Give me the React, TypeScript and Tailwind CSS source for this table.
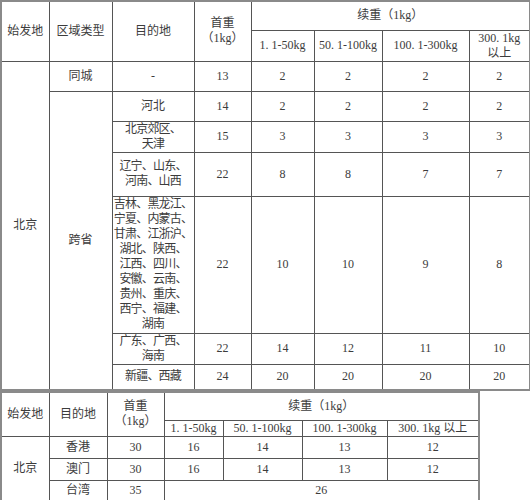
import React from "react";

const td = "border border-[#555] text-center align-middle p-0 leading-[15px] whitespace-nowrap";
const tdt = "border border-[#555] text-center align-middle p-0 leading-[15px] whitespace-nowrap tracking-[-0.8px]";

export default function App() {
  return (
    <div
      className="w-[530px] h-[500px] bg-white text-[#3c3c3c] text-[12px] overflow-hidden"
      style={{ fontFamily: '"Liberation Serif","Noto Sans CJK SC",serif' }}
    >
      <table className="table-fixed border-collapse w-[529px] border-2 border-[#8a8a8a]">
        <colgroup>
          <col className="w-[48px]" />
          <col className="w-[63px]" />
          <col className="w-[82px]" />
          <col className="w-[57px]" />
          <col className="w-[63px]" />
          <col className="w-[68px]" />
          <col className="w-[87px]" />
          <col className="w-[61px]" />
        </colgroup>
        <tbody>
          <tr className="h-[29px]">
            <td rowSpan={2} className={td}>始发地</td>
            <td rowSpan={2} className={td}>区域类型</td>
            <td rowSpan={2} className={td}>目的地</td>
            <td rowSpan={2} className={td}>首重<br />（1kg）</td>
            <td colSpan={4} className={td}>续重（1kg）</td>
          </tr>
          <tr className="h-[30px]">
            <td className={td}>1. 1-50kg</td>
            <td className={td}>50. 1-100kg</td>
            <td className={td}>100. 1-300kg</td>
            <td className={td}>300. 1kg<br />以上</td>
          </tr>
          <tr className="h-[30px]">
            <td rowSpan={7} className={td}>北京</td>
            <td className={td}>同城</td>
            <td className={td}>-</td>
            <td className={td}>13</td>
            <td className={td}>2</td>
            <td className={td}>2</td>
            <td className={td}>2</td>
            <td className={td}>2</td>
          </tr>
          <tr className="h-[30px]">
            <td rowSpan={6} className={td}>跨省</td>
            <td className={td}>河北</td>
            <td className={td}>14</td>
            <td className={td}>2</td>
            <td className={td}>2</td>
            <td className={td}>2</td>
            <td className={td}>2</td>
          </tr>
          <tr className="h-[31px]">
            <td className={tdt}>北京郊区、<br />天津</td>
            <td className={td}>15</td>
            <td className={td}>3</td>
            <td className={td}>3</td>
            <td className={td}>3</td>
            <td className={td}>3</td>
          </tr>
          <tr className="h-[44px]">
            <td className={tdt}>辽宁、山东、<br />河南、山西</td>
            <td className={td}>22</td>
            <td className={td}>8</td>
            <td className={td}>8</td>
            <td className={td}>7</td>
            <td className={td}>7</td>
          </tr>
          <tr className="h-[137px]">
            <td className={tdt}>
              吉林、黑龙江、<br />宁夏、内蒙古、<br />甘肃、江浙沪、<br />湖北、陕西、<br />江西、四川、<br />安徽、云南、<br />贵州、重庆、<br />西宁、福建、<br />湖南
            </td>
            <td className={td}>22</td>
            <td className={td}>10</td>
            <td className={td}>10</td>
            <td className={td}>9</td>
            <td className={td}>8</td>
          </tr>
          <tr className="h-[31px]">
            <td className={tdt}>广东、广西、<br />海南</td>
            <td className={td}>22</td>
            <td className={td}>14</td>
            <td className={td}>12</td>
            <td className={td}>11</td>
            <td className={td}>10</td>
          </tr>
          <tr className="h-[26px]">
            <td className={tdt}>新疆、西藏</td>
            <td className={td}>24</td>
            <td className={td}>20</td>
            <td className={td}>20</td>
            <td className={td}>20</td>
            <td className={td}>20</td>
          </tr>
        </tbody>
      </table>

      <table className="table-fixed border-collapse w-[478px] border-2 border-[#8a8a8a]">
        <colgroup>
          <col className="w-[48px]" />
          <col className="w-[58px]" />
          <col className="w-[57px]" />
          <col className="w-[59px]" />
          <col className="w-[79px]" />
          <col className="w-[85px]" />
          <col className="w-[92px]" />
        </colgroup>
        <tbody>
          <tr className="h-[28px]">
            <td rowSpan={2} className={td}>始发地</td>
            <td rowSpan={2} className={td}>目的地</td>
            <td rowSpan={2} className={td}>首重<br />（1kg）</td>
            <td colSpan={4} className={td}>续重（1kg）</td>
          </tr>
          <tr className="h-[16px]">
            <td className={td}>1. 1-50kg</td>
            <td className={td}>50. 1-100kg</td>
            <td className={td}>100. 1-300kg</td>
            <td className={td}>300. 1kg 以上</td>
          </tr>
          <tr className="h-[22px]">
            <td rowSpan={3} className={td}>北京</td>
            <td className={td}>香港</td>
            <td className={td}>30</td>
            <td className={td}>16</td>
            <td className={td}>14</td>
            <td className={td}>13</td>
            <td className={td}>12</td>
          </tr>
          <tr className="h-[22px]">
            <td className={td}>澳门</td>
            <td className={td}>30</td>
            <td className={td}>16</td>
            <td className={td}>14</td>
            <td className={td}>13</td>
            <td className={td}>12</td>
          </tr>
          <tr className="h-[21px]">
            <td className={td}>台湾</td>
            <td className={td}>35</td>
            <td colSpan={4} className={td}>26</td>
          </tr>
        </tbody>
      </table>
    </div>
  );
}
